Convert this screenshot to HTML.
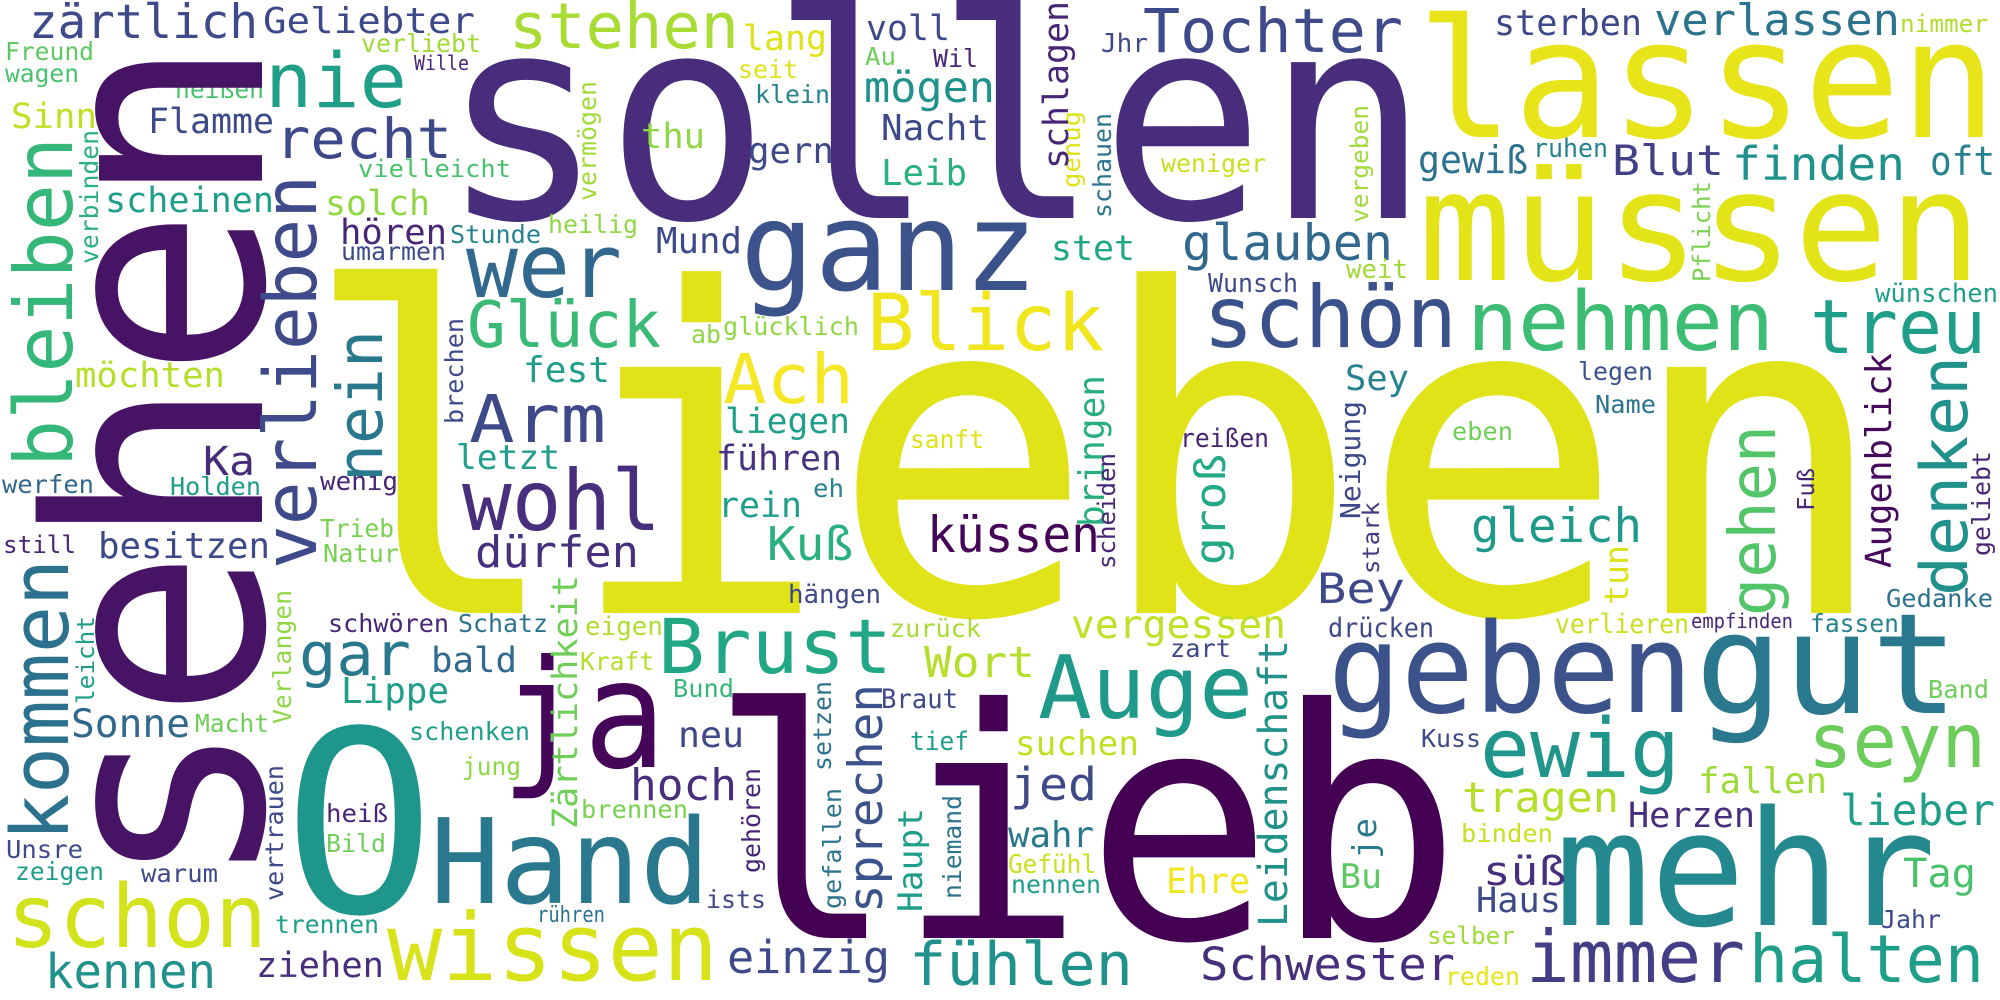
<!DOCTYPE html>
<html><head><meta charset="utf-8"><style>
html,body{margin:0;padding:0;background:#fff}
svg{display:block}
text{font-family:"DejaVu Sans Mono","Liberation Mono",monospace}
</style></head><body>
<svg width="2000" height="1000" viewBox="0 0 2000 1000" xmlns="http://www.w3.org/2000/svg">
<rect width="2000" height="1000" fill="#fff"/>
<g>
<text x="300" y="613" font-size="450" textLength="1590" lengthAdjust="spacingAndGlyphs" fill="#dfe318">lieben</text>
<text x="440" y="218" font-size="285" textLength="990" lengthAdjust="spacingAndGlyphs" fill="#472d7b">sollen</text>
<text x="708" y="938" font-size="320" textLength="754" lengthAdjust="spacingAndGlyphs" fill="#440154">lieb</text>
<text x="1418" y="280" font-size="153" textLength="564" lengthAdjust="spacingAndGlyphs" fill="#e2e418">müssen</text>
<text x="1417" y="137" font-size="165" textLength="580" lengthAdjust="spacingAndGlyphs" fill="#e7e419">lassen</text>
<text x="740" y="290" font-size="123" textLength="298" lengthAdjust="spacingAndGlyphs" fill="#3b528b">ganz</text>
<text x="1143" y="52" font-size="61" textLength="260" lengthAdjust="spacingAndGlyphs" fill="#3e4a89">Tochter</text>
<text x="1203" y="347" font-size="86" textLength="254" lengthAdjust="spacingAndGlyphs" fill="#3b518b">schön</text>
<text x="1467" y="350" font-size="82" textLength="307" lengthAdjust="spacingAndGlyphs" fill="#3dbc74">nehmen</text>
<text x="1810" y="353" font-size="75" textLength="176" lengthAdjust="spacingAndGlyphs" fill="#1f9e89">treu</text>
<text x="466" y="297" font-size="88" textLength="156" lengthAdjust="spacingAndGlyphs" fill="#31688e">wer</text>
<text x="265" y="107" font-size="76" textLength="142" lengthAdjust="spacingAndGlyphs" fill="#1f9f88">nie</text>
<text x="275" y="158" font-size="55" textLength="177" lengthAdjust="spacingAndGlyphs" fill="#3e4989">recht</text>
<text x="509" y="48" font-size="63" textLength="230" lengthAdjust="spacingAndGlyphs" fill="#a8db34">stehen</text>
<text x="658" y="673" font-size="76" textLength="234" lengthAdjust="spacingAndGlyphs" fill="#22a785">Brust</text>
<text x="501" y="767" font-size="150" textLength="165" lengthAdjust="spacingAndGlyphs" fill="#450559">ja</text>
<text x="430" y="903" font-size="118" textLength="280" lengthAdjust="spacingAndGlyphs" fill="#2a788e">Hand</text>
<text x="387" y="980" font-size="94" textLength="331" lengthAdjust="spacingAndGlyphs" fill="#d8e219">wissen</text>
<text x="7" y="947" font-size="87" textLength="260" lengthAdjust="spacingAndGlyphs" fill="#d2e21b">schon</text>
<text x="45" y="988" font-size="48" textLength="171" lengthAdjust="spacingAndGlyphs" fill="#21918c">kennen</text>
<text x="1038" y="718" font-size="87" textLength="215" lengthAdjust="spacingAndGlyphs" fill="#1f998a">Auge</text>
<text x="1328" y="712" font-size="124" textLength="365" lengthAdjust="spacingAndGlyphs" fill="#3b528b">geben</text>
<text x="1695" y="713" font-size="140" textLength="264" lengthAdjust="spacingAndGlyphs" fill="#2a788e">gut</text>
<text x="1555" y="925" font-size="160" textLength="381" lengthAdjust="spacingAndGlyphs" fill="#23898e">mehr</text>
<text x="1526" y="982" font-size="72" textLength="219" lengthAdjust="spacingAndGlyphs" fill="#433e85">immer</text>
<text x="1749" y="982" font-size="66" textLength="235" lengthAdjust="spacingAndGlyphs" fill="#1f9e89">halten</text>
<text x="1480" y="777" font-size="82" textLength="200" lengthAdjust="spacingAndGlyphs" fill="#1f958b">ewig</text>
<text x="1808" y="767" font-size="75" textLength="178" lengthAdjust="spacingAndGlyphs" fill="#6ccd5a">seyn</text>
<text x="867" y="350" font-size="78" textLength="237" lengthAdjust="spacingAndGlyphs" fill="#f1e51d">Blick</text>
<text x="723" y="403" font-size="69" textLength="131" lengthAdjust="spacingAndGlyphs" fill="#f5e626">Ach</text>
<text x="469" y="442" font-size="66" textLength="137" lengthAdjust="spacingAndGlyphs" fill="#3e4989">Arm</text>
<text x="462" y="530" font-size="84" textLength="199" lengthAdjust="spacingAndGlyphs" fill="#472f7d">wohl</text>
<text x="467" y="347" font-size="64" textLength="194" lengthAdjust="spacingAndGlyphs" fill="#3aba76">Glück</text>
<text x="475" y="567" font-size="44" textLength="164" lengthAdjust="spacingAndGlyphs" fill="#46307e">dürfen</text>
<text x="927" y="552" font-size="50" textLength="173" lengthAdjust="spacingAndGlyphs" fill="#450457">küssen</text>
<text x="767" y="560" font-size="46" textLength="86" lengthAdjust="spacingAndGlyphs" fill="#2ab07f">Kuß</text>
<text x="1471" y="542" font-size="47" textLength="171" lengthAdjust="spacingAndGlyphs" fill="#1f9a8a">gleich</text>
<text x="1654" y="35" font-size="44" textLength="246" lengthAdjust="spacingAndGlyphs" fill="#2c738e">verlassen</text>
<text x="1494" y="35" font-size="36" textLength="148" lengthAdjust="spacingAndGlyphs" fill="#3e4989">sterben</text>
<text x="1900" y="32" font-size="24" textLength="88" lengthAdjust="spacingAndGlyphs" fill="#b0dd2f">nimmer</text>
<text x="1612" y="175" font-size="42" textLength="112" lengthAdjust="spacingAndGlyphs" fill="#424086">Blut</text>
<text x="1732" y="180" font-size="46" textLength="173" lengthAdjust="spacingAndGlyphs" fill="#20928c">finden</text>
<text x="1930" y="175" font-size="40" textLength="65" lengthAdjust="spacingAndGlyphs" fill="#26838f">oft</text>
<text x="1418" y="173" font-size="38" textLength="110" lengthAdjust="spacingAndGlyphs" fill="#2c728e">gewiß</text>
<text x="1533" y="157" font-size="26" textLength="75" lengthAdjust="spacingAndGlyphs" fill="#26828e">ruhen</text>
<text x="1875" y="302" font-size="26" textLength="123" lengthAdjust="spacingAndGlyphs" fill="#1f9e89">wünschen</text>
<text x="1578" y="380" font-size="25" textLength="75" lengthAdjust="spacingAndGlyphs" fill="#3b528b">legen</text>
<text x="1595" y="413" font-size="25" textLength="61" lengthAdjust="spacingAndGlyphs" fill="#2c738e">Name</text>
<text x="1182" y="260" font-size="50" textLength="211" lengthAdjust="spacingAndGlyphs" fill="#31688e">glauben</text>
<text x="1208" y="292" font-size="26" textLength="90" lengthAdjust="spacingAndGlyphs" fill="#3e4989">Wunsch</text>
<text x="1346" y="278" font-size="26" textLength="62" lengthAdjust="spacingAndGlyphs" fill="#a0da39">weit</text>
<text x="1161" y="172" font-size="25" textLength="105" lengthAdjust="spacingAndGlyphs" fill="#c8e020">weniger</text>
<text x="1101" y="52" font-size="26" textLength="47" lengthAdjust="spacingAndGlyphs" fill="#3e4989">Jhr</text>
<text x="1051" y="260" font-size="35" textLength="84" lengthAdjust="spacingAndGlyphs" fill="#21a685">stet</text>
<text x="1345" y="390" font-size="35" textLength="64" lengthAdjust="spacingAndGlyphs" fill="#26828e">Sey</text>
<text x="1180" y="447" font-size="26" textLength="89" lengthAdjust="spacingAndGlyphs" fill="#482475">reißen</text>
<text x="1452" y="440" font-size="25" textLength="61" lengthAdjust="spacingAndGlyphs" fill="#6ece58">eben</text>
<text x="1071" y="638" font-size="39" textLength="215" lengthAdjust="spacingAndGlyphs" fill="#c0df25">vergessen</text>
<text x="1317" y="603" font-size="42" textLength="88" lengthAdjust="spacingAndGlyphs" fill="#3e4989">Bey</text>
<text x="1328" y="637" font-size="27" textLength="106" lengthAdjust="spacingAndGlyphs" fill="#3e4989">drücken</text>
<text x="1170" y="657" font-size="25" textLength="61" lengthAdjust="spacingAndGlyphs" fill="#3e4989">zart</text>
<text x="1015" y="755" font-size="34" textLength="124" lengthAdjust="spacingAndGlyphs" fill="#c2df23">suchen</text>
<text x="1010" y="800" font-size="45" textLength="87" lengthAdjust="spacingAndGlyphs" fill="#3e4989">jed</text>
<text x="1008" y="847" font-size="36" textLength="86" lengthAdjust="spacingAndGlyphs" fill="#2a788e">wahr</text>
<text x="1008" y="873" font-size="26" textLength="88" lengthAdjust="spacingAndGlyphs" fill="#c8e020">Gefühl</text>
<text x="1011" y="893" font-size="25" textLength="90" lengthAdjust="spacingAndGlyphs" fill="#1f9e89">nennen</text>
<text x="1166" y="893" font-size="35" textLength="84" lengthAdjust="spacingAndGlyphs" fill="#f1e51d">Ehre</text>
<text x="1340" y="888" font-size="34" textLength="42" lengthAdjust="spacingAndGlyphs" fill="#5ec962">Bu</text>
<text x="1421" y="747" font-size="25" textLength="60" lengthAdjust="spacingAndGlyphs" fill="#3e4989">Kuss</text>
<text x="1200" y="980" font-size="45" textLength="255" lengthAdjust="spacingAndGlyphs" fill="#472f7d">Schwester</text>
<text x="1427" y="944" font-size="24" textLength="88" lengthAdjust="spacingAndGlyphs" fill="#a0da39">selber</text>
<text x="1445" y="985" font-size="25" textLength="75" lengthAdjust="spacingAndGlyphs" fill="#e7e419">reden</text>
<text x="909" y="985" font-size="60" textLength="224" lengthAdjust="spacingAndGlyphs" fill="#21918c">fühlen</text>
<text x="727" y="973" font-size="45" textLength="163" lengthAdjust="spacingAndGlyphs" fill="#3e4989">einzig</text>
<text x="881" y="708" font-size="27" textLength="77" lengthAdjust="spacingAndGlyphs" fill="#3e4989">Braut</text>
<text x="910" y="750" font-size="26" textLength="59" lengthAdjust="spacingAndGlyphs" fill="#1f9e89">tief</text>
<text x="890" y="637" font-size="25" textLength="91" lengthAdjust="spacingAndGlyphs" fill="#a8db34">zurück</text>
<text x="788" y="603" font-size="26" textLength="93" lengthAdjust="spacingAndGlyphs" fill="#3e4989">hängen</text>
<text x="924" y="677" font-size="43" textLength="111" lengthAdjust="spacingAndGlyphs" fill="#b5de2b">Wort</text>
<text x="678" y="747" font-size="36" textLength="66" lengthAdjust="spacingAndGlyphs" fill="#3f4788">neu</text>
<text x="630" y="800" font-size="44" textLength="107" lengthAdjust="spacingAndGlyphs" fill="#472f7d">hoch</text>
<text x="581" y="818" font-size="25" textLength="107" lengthAdjust="spacingAndGlyphs" fill="#7ad151">brennen</text>
<text x="706" y="908" font-size="25" textLength="60" lengthAdjust="spacingAndGlyphs" fill="#3e4989">ists</text>
<text x="585" y="635" font-size="26" textLength="78" lengthAdjust="spacingAndGlyphs" fill="#b0dd2f">eigen</text>
<text x="580" y="670" font-size="25" textLength="74" lengthAdjust="spacingAndGlyphs" fill="#b5de2b">Kraft</text>
<text x="673" y="697" font-size="25" textLength="61" lengthAdjust="spacingAndGlyphs" fill="#35b779">Bund</text>
<text x="537" y="922" font-size="22" textLength="68" lengthAdjust="spacingAndGlyphs" fill="#2c738e">rühren</text>
<text x="718" y="517" font-size="35" textLength="84" lengthAdjust="spacingAndGlyphs" fill="#1f9e89">rein</text>
<text x="716" y="470" font-size="35" textLength="126" lengthAdjust="spacingAndGlyphs" fill="#46327e">führen</text>
<text x="725" y="433" font-size="35" textLength="125" lengthAdjust="spacingAndGlyphs" fill="#1f9e89">liegen</text>
<text x="813" y="497" font-size="25" textLength="31" lengthAdjust="spacingAndGlyphs" fill="#26828e">eh</text>
<text x="910" y="448" font-size="25" textLength="74" lengthAdjust="spacingAndGlyphs" fill="#dde318">sanft</text>
<text x="723" y="335" font-size="25" textLength="136" lengthAdjust="spacingAndGlyphs" fill="#8fd744">glücklich</text>
<text x="691" y="343" font-size="25" textLength="30" lengthAdjust="spacingAndGlyphs" fill="#8fd744">ab</text>
<text x="523" y="382" font-size="36" textLength="87" lengthAdjust="spacingAndGlyphs" fill="#1f9e89">fest</text>
<text x="456" y="469" font-size="34" textLength="104" lengthAdjust="spacingAndGlyphs" fill="#1f9e89">letzt</text>
<text x="656" y="253" font-size="36" textLength="86" lengthAdjust="spacingAndGlyphs" fill="#3e4989">Mund</text>
<text x="548" y="233" font-size="25" textLength="90" lengthAdjust="spacingAndGlyphs" fill="#8fd744">heilig</text>
<text x="641" y="148" font-size="35" textLength="64" lengthAdjust="spacingAndGlyphs" fill="#8fd744">thu</text>
<text x="748" y="163" font-size="36" textLength="86" lengthAdjust="spacingAndGlyphs" fill="#3e4989">gern</text>
<text x="881" y="185" font-size="36" textLength="86" lengthAdjust="spacingAndGlyphs" fill="#2ab07f">Leib</text>
<text x="881" y="140" font-size="36" textLength="108" lengthAdjust="spacingAndGlyphs" fill="#3e4989">Nacht</text>
<text x="864" y="102" font-size="43" textLength="131" lengthAdjust="spacingAndGlyphs" fill="#21918c">mögen</text>
<text x="755" y="103" font-size="25" textLength="75" lengthAdjust="spacingAndGlyphs" fill="#26828e">klein</text>
<text x="738" y="78" font-size="25" textLength="60" lengthAdjust="spacingAndGlyphs" fill="#dde318">seit</text>
<text x="865" y="65" font-size="25" textLength="31" lengthAdjust="spacingAndGlyphs" fill="#6ece58">Au</text>
<text x="933" y="67" font-size="25" textLength="45" lengthAdjust="spacingAndGlyphs" fill="#482677">Wil</text>
<text x="866" y="40" font-size="35" textLength="84" lengthAdjust="spacingAndGlyphs" fill="#3e4989">voll</text>
<text x="743" y="50" font-size="35" textLength="84" lengthAdjust="spacingAndGlyphs" fill="#dde318">lang</text>
<text x="450" y="243" font-size="25" textLength="91" lengthAdjust="spacingAndGlyphs" fill="#26828e">Stunde</text>
<text x="358" y="177" font-size="24" textLength="153" lengthAdjust="spacingAndGlyphs" fill="#4ac16d">vielleicht</text>
<text x="341" y="260" font-size="25" textLength="105" lengthAdjust="spacingAndGlyphs" fill="#3e4989">umarmen</text>
<text x="340" y="244" font-size="35" textLength="107" lengthAdjust="spacingAndGlyphs" fill="#482677">hören</text>
<text x="325" y="215" font-size="35" textLength="105" lengthAdjust="spacingAndGlyphs" fill="#8fd744">solch</text>
<text x="105" y="212" font-size="35" textLength="169" lengthAdjust="spacingAndGlyphs" fill="#1f9e89">scheinen</text>
<text x="148" y="133" font-size="35" textLength="126" lengthAdjust="spacingAndGlyphs" fill="#3e4989">Flamme</text>
<text x="175" y="98" font-size="25" textLength="89" lengthAdjust="spacingAndGlyphs" fill="#4ac16d">heißen</text>
<text x="361" y="52" font-size="25" textLength="120" lengthAdjust="spacingAndGlyphs" fill="#a0da39">verliebt</text>
<text x="414" y="70" font-size="20" textLength="55" lengthAdjust="spacingAndGlyphs" fill="#482677">Wille</text>
<text x="5" y="60" font-size="25" textLength="89" lengthAdjust="spacingAndGlyphs" fill="#5ec962">Freund</text>
<text x="5" y="82" font-size="25" textLength="74" lengthAdjust="spacingAndGlyphs" fill="#4ac16d">wagen</text>
<text x="11" y="128" font-size="35" textLength="86" lengthAdjust="spacingAndGlyphs" fill="#c2df23">Sinn</text>
<text x="75" y="387" font-size="35" textLength="150" lengthAdjust="spacingAndGlyphs" fill="#b5de2b">möchten</text>
<text x="203" y="475" font-size="40" textLength="52" lengthAdjust="spacingAndGlyphs" fill="#472c7a">Ka</text>
<text x="2" y="493" font-size="25" textLength="92" lengthAdjust="spacingAndGlyphs" fill="#31688e">werfen</text>
<text x="170" y="495" font-size="25" textLength="91" lengthAdjust="spacingAndGlyphs" fill="#1f9e89">Holden</text>
<text x="320" y="490" font-size="26" textLength="78" lengthAdjust="spacingAndGlyphs" fill="#482677">wenig</text>
<text x="29" y="38" font-size="47" textLength="229" lengthAdjust="spacingAndGlyphs" fill="#3e4a89">zärtlich</text>
<text x="263" y="33" font-size="36" textLength="212" lengthAdjust="spacingAndGlyphs" fill="#3e4989">Geliebter</text>
<text x="3" y="553" font-size="24" textLength="73" lengthAdjust="spacingAndGlyphs" fill="#482677">still</text>
<text x="98" y="558" font-size="36" textLength="172" lengthAdjust="spacingAndGlyphs" fill="#3e4989">besitzen</text>
<text x="320" y="537" font-size="25" textLength="74" lengthAdjust="spacingAndGlyphs" fill="#7ad151">Trieb</text>
<text x="323" y="562" font-size="25" textLength="76" lengthAdjust="spacingAndGlyphs" fill="#7ad151">Natur</text>
<text x="328" y="632" font-size="25" textLength="121" lengthAdjust="spacingAndGlyphs" fill="#482677">schwören</text>
<text x="458" y="632" font-size="25" textLength="90" lengthAdjust="spacingAndGlyphs" fill="#2c738e">Schatz</text>
<text x="299" y="675" font-size="60" textLength="112" lengthAdjust="spacingAndGlyphs" fill="#2a788e">gar</text>
<text x="431" y="672" font-size="35" textLength="86" lengthAdjust="spacingAndGlyphs" fill="#31688e">bald</text>
<text x="341" y="703" font-size="36" textLength="108" lengthAdjust="spacingAndGlyphs" fill="#1f9e89">Lippe</text>
<text x="71" y="737" font-size="39" textLength="119" lengthAdjust="spacingAndGlyphs" fill="#31688e">Sonne</text>
<text x="195" y="732" font-size="25" textLength="74" lengthAdjust="spacingAndGlyphs" fill="#6ece58">Macht</text>
<text x="409" y="740" font-size="25" textLength="121" lengthAdjust="spacingAndGlyphs" fill="#1f9e89">schenken</text>
<text x="462" y="775" font-size="25" textLength="59" lengthAdjust="spacingAndGlyphs" fill="#8fd744">jung</text>
<text x="326" y="822" font-size="25" textLength="62" lengthAdjust="spacingAndGlyphs" fill="#482677">heiß</text>
<text x="326" y="852" font-size="25" textLength="60" lengthAdjust="spacingAndGlyphs" fill="#6ece58">Bild</text>
<text x="6" y="858" font-size="25" textLength="77" lengthAdjust="spacingAndGlyphs" fill="#3e4989">Unsre</text>
<text x="15" y="880" font-size="25" textLength="89" lengthAdjust="spacingAndGlyphs" fill="#1f9e89">zeigen</text>
<text x="141" y="882" font-size="25" textLength="77" lengthAdjust="spacingAndGlyphs" fill="#3e4989">warum</text>
<text x="275" y="933" font-size="25" textLength="104" lengthAdjust="spacingAndGlyphs" fill="#1f9e89">trennen</text>
<text x="256" y="977" font-size="35" textLength="128" lengthAdjust="spacingAndGlyphs" fill="#472f7d">ziehen</text>
<text x="1555" y="633" font-size="27" textLength="134" lengthAdjust="spacingAndGlyphs" fill="#c8e020">verlieren</text>
<text x="1691" y="628" font-size="20" textLength="102" lengthAdjust="spacingAndGlyphs" fill="#482677">empfinden</text>
<text x="1810" y="632" font-size="25" textLength="89" lengthAdjust="spacingAndGlyphs" fill="#26828e">fassen</text>
<text x="1886" y="607" font-size="25" textLength="107" lengthAdjust="spacingAndGlyphs" fill="#2c728e">Gedanke</text>
<text x="1928" y="698" font-size="25" textLength="61" lengthAdjust="spacingAndGlyphs" fill="#6ece58">Band</text>
<text x="1698" y="793" font-size="36" textLength="129" lengthAdjust="spacingAndGlyphs" fill="#a0da39">fallen</text>
<text x="1462" y="812" font-size="42" textLength="157" lengthAdjust="spacingAndGlyphs" fill="#b5de2b">tragen</text>
<text x="1628" y="827" font-size="35" textLength="127" lengthAdjust="spacingAndGlyphs" fill="#472f7d">Herzen</text>
<text x="1840" y="825" font-size="43" textLength="155" lengthAdjust="spacingAndGlyphs" fill="#1f9e89">lieber</text>
<text x="1903" y="887" font-size="40" textLength="73" lengthAdjust="spacingAndGlyphs" fill="#4ac16d">Tag</text>
<text x="1483" y="885" font-size="40" textLength="83" lengthAdjust="spacingAndGlyphs" fill="#472f7d">süß</text>
<text x="1476" y="912" font-size="35" textLength="85" lengthAdjust="spacingAndGlyphs" fill="#3e4989">Haus</text>
<text x="1461" y="842" font-size="25" textLength="92" lengthAdjust="spacingAndGlyphs" fill="#c8e020">binden</text>
<text x="1881" y="928" font-size="25" textLength="60" lengthAdjust="spacingAndGlyphs" fill="#3e4989">Jahr</text>
<text x="283" y="912" font-size="253" fill="#1f968b">O</text>
</g>
<g>
<text transform="translate(262,890) rotate(-90)" font-size="298" textLength="853" lengthAdjust="spacingAndGlyphs" fill="#471365">sehen</text>
<text transform="translate(72,467) rotate(-90)" font-size="80" textLength="330" lengthAdjust="spacingAndGlyphs" fill="#35b779">bleiben</text>
<text transform="translate(316,569) rotate(-90)" font-size="73" textLength="394" lengthAdjust="spacingAndGlyphs" fill="#3e4a89">verlieben</text>
<text transform="translate(382,482) rotate(-90)" font-size="63" textLength="152" lengthAdjust="spacingAndGlyphs" fill="#2a788e">nein</text>
<text transform="translate(68,841) rotate(-90)" font-size="79" textLength="282" lengthAdjust="spacingAndGlyphs" fill="#2c728e">kommen</text>
<text transform="translate(1775,616) rotate(-90)" font-size="64" textLength="191" lengthAdjust="spacingAndGlyphs" fill="#52c569">gehen</text>
<text transform="translate(1967,596) rotate(-90)" font-size="65" textLength="240" lengthAdjust="spacingAndGlyphs" fill="#21918c">denken</text>
<text transform="translate(1891,568) rotate(-90)" font-size="36" textLength="215" lengthAdjust="spacingAndGlyphs" fill="#450a5b">Augenblick</text>
<text transform="translate(1710,282) rotate(-90)" font-size="24" textLength="101" lengthAdjust="spacingAndGlyphs" fill="#7ad151">Pflicht</text>
<text transform="translate(1368,223) rotate(-90)" font-size="24" textLength="118" lengthAdjust="spacingAndGlyphs" fill="#a0da39">vergeben</text>
<text transform="translate(1111,218) rotate(-90)" font-size="25" textLength="105" lengthAdjust="spacingAndGlyphs" fill="#2c738e">schauen</text>
<text transform="translate(1080,188) rotate(-90)" font-size="25" textLength="77" lengthAdjust="spacingAndGlyphs" fill="#dde318">genug</text>
<text transform="translate(1068,169) rotate(-90)" font-size="35" textLength="168" lengthAdjust="spacingAndGlyphs" fill="#482677">schlagen</text>
<text transform="translate(1104,527) rotate(-90)" font-size="36" textLength="152" lengthAdjust="spacingAndGlyphs" fill="#29af7f">bringen</text>
<text transform="translate(1225,565) rotate(-90)" font-size="42" textLength="111" lengthAdjust="spacingAndGlyphs" fill="#23a983">groß</text>
<text transform="translate(1360,519) rotate(-90)" font-size="28" textLength="118" lengthAdjust="spacingAndGlyphs" fill="#3e4989">Neigung</text>
<text transform="translate(1379,574) rotate(-90)" font-size="23" textLength="72" lengthAdjust="spacingAndGlyphs" fill="#453781">stark</text>
<text transform="translate(1115,569) rotate(-90)" font-size="24" textLength="116" lengthAdjust="spacingAndGlyphs" fill="#482677">scheiden</text>
<text transform="translate(1287,927) rotate(-90)" font-size="40" textLength="287" lengthAdjust="spacingAndGlyphs" fill="#21918c">Leidenschaft</text>
<text transform="translate(1376,859) rotate(-90)" font-size="33" textLength="41" lengthAdjust="spacingAndGlyphs" fill="#2a788e">je</text>
<text transform="translate(882,913) rotate(-90)" font-size="47" textLength="229" lengthAdjust="spacingAndGlyphs" fill="#3b528b">sprechen</text>
<text transform="translate(922,912) rotate(-90)" font-size="34" textLength="104" lengthAdjust="spacingAndGlyphs" fill="#1f9e89">Haupt</text>
<text transform="translate(961,899) rotate(-90)" font-size="25" textLength="104" lengthAdjust="spacingAndGlyphs" fill="#2c738e">niemand</text>
<text transform="translate(841,909) rotate(-90)" font-size="25" textLength="121" lengthAdjust="spacingAndGlyphs" fill="#2c738e">gefallen</text>
<text transform="translate(831,771) rotate(-90)" font-size="25" textLength="90" lengthAdjust="spacingAndGlyphs" fill="#2c728e">setzen</text>
<text transform="translate(760,873) rotate(-90)" font-size="25" textLength="105" lengthAdjust="spacingAndGlyphs" fill="#482677">gehören</text>
<text transform="translate(577,829) rotate(-90)" font-size="35" textLength="254" lengthAdjust="spacingAndGlyphs" fill="#6ece58">Zärtlichkeit</text>
<text transform="translate(596,201) rotate(-90)" font-size="25" textLength="120" lengthAdjust="spacingAndGlyphs" fill="#a0da39">vermögen</text>
<text transform="translate(98,264) rotate(-90)" font-size="25" textLength="134" lengthAdjust="spacingAndGlyphs" fill="#2ab07f">verbinden</text>
<text transform="translate(463,424) rotate(-90)" font-size="25" textLength="106" lengthAdjust="spacingAndGlyphs" fill="#3e4989">brechen</text>
<text transform="translate(94,704) rotate(-90)" font-size="24" textLength="88" lengthAdjust="spacingAndGlyphs" fill="#1f9e89">leicht</text>
<text transform="translate(291,724) rotate(-90)" font-size="25" textLength="134" lengthAdjust="spacingAndGlyphs" fill="#8fd744">Verlangen</text>
<text transform="translate(283,901) rotate(-90)" font-size="25" textLength="136" lengthAdjust="spacingAndGlyphs" fill="#3e4989">vertrauen</text>
<text transform="translate(1628,605) rotate(-90)" font-size="33" textLength="60" lengthAdjust="spacingAndGlyphs" fill="#dde318">tun</text>
<text transform="translate(1990,556) rotate(-90)" font-size="25" textLength="105" lengthAdjust="spacingAndGlyphs" fill="#482677">geliebt</text>
<text transform="translate(1814,511) rotate(-90)" font-size="23" textLength="43" lengthAdjust="spacingAndGlyphs" fill="#482677">Fuß</text>
</g>
</svg>
</body></html>
